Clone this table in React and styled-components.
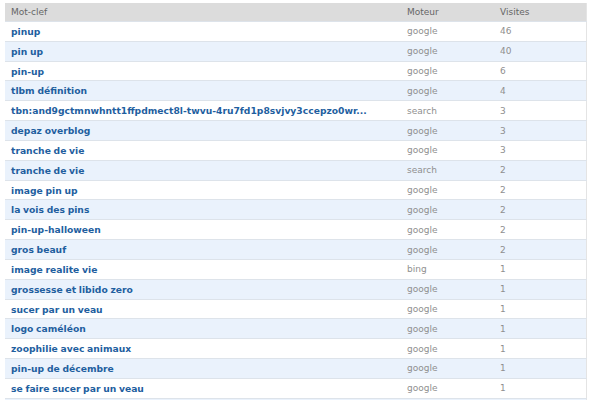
import React from 'react';
import styled, { createGlobalStyle } from 'styled-components';

const GlobalStyle = createGlobalStyle`
  body {
    margin: 0;
    background: #fff;
    font-family: "DejaVu Sans", Verdana, sans-serif;
  }
`;

const Wrap = styled.div`
  padding: 3px 6px 0 5px;
`;

const Table = styled.table`
  width: 100%;
  border-collapse: collapse;
  border-right: 1px solid #e4e4e4;
  table-layout: fixed;
`;

const HeadCell = styled.th`
  background: #dcdcdc;
  color: #666;
  font-size: 9px;
  font-weight: normal;
  text-align: left;
  height: 18px;
  padding: 0 0 0 6px;
  width: ${p => p.$width || 'auto'};
`;

const Row = styled.tr`
  background: ${p => (p.$alt ? '#eaf2fc' : '#fff')};
  border-top: 1px solid #dde3ea;
`;

const Cell = styled.td`
  height: 18.83px;
  padding: 0 0 0 6px;
  font-size: 9px;
  color: #8f8f8f;
  white-space: nowrap;
  overflow: hidden;
`;

const Keyword = styled.a`
  color: #1f5f9f;
  font-weight: bold;
  font-size: 9.2px;
  word-spacing: -0.5px;
  text-decoration: none;
`;

const rows = [
  ['pinup', 'google', 46],
  ['pin up', 'google', 40],
  ['pin-up', 'google', 6],
  ['tlbm définition', 'google', 4],
  ['tbn:and9gctmnwhntt1ffpdmect8l-twvu-4ru7fd1p8svjvy3ccepzo0wr...', 'search', 3],
  ['depaz overblog', 'google', 3],
  ['tranche de vie', 'google', 3],
  ['tranche de vie', 'search', 2],
  ['image pin up', 'google', 2],
  ['la vois des pins', 'google', 2],
  ['pin-up-halloween', 'google', 2],
  ['gros beauf', 'google', 2],
  ['image realite vie', 'bing', 1],
  ['grossesse et libido zero', 'google', 1],
  ['sucer par un veau', 'google', 1],
  ['logo caméléon', 'google', 1],
  ['zoophilie avec animaux', 'google', 1],
  ['pin-up de décembre', 'google', 1],
  ['se faire sucer par un veau', 'google', 1],
  ['', '', ''],
];

export default function App() {
  return (
    <Wrap>
      <GlobalStyle />
      <Table>
        <thead>
          <tr>
            <HeadCell>Mot-clef</HeadCell>
            <HeadCell $width="87px">Moteur</HeadCell>
            <HeadCell $width="86px">Visites</HeadCell>
          </tr>
        </thead>
        <tbody>
          {rows.map(([kw, engine, visits], i) => (
            <Row key={i} $alt={i % 2 === 1}>
              <Cell><Keyword href="#">{kw}</Keyword></Cell>
              <Cell>{engine}</Cell>
              <Cell>{visits}</Cell>
            </Row>
          ))}
        </tbody>
      </Table>
    </Wrap>
  );
}
